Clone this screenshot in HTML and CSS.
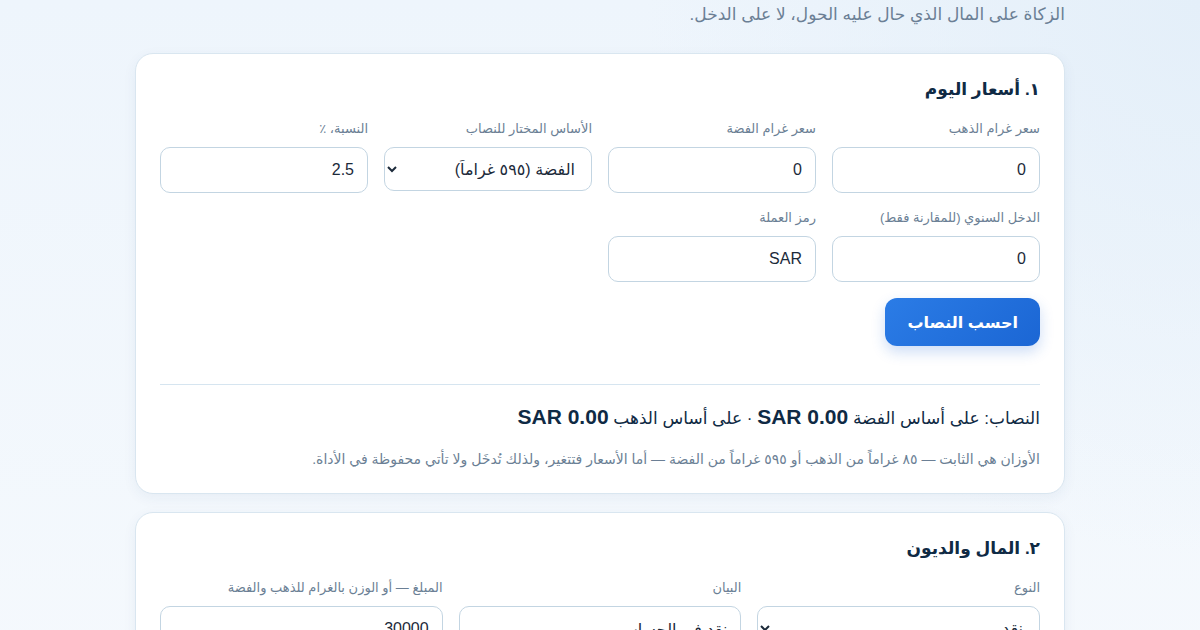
FILE: index.html
```html
<!DOCTYPE html>
<html lang="ar" dir="rtl">
	<head>
		<meta charset="utf-8" />
		<title>حاسبة الزكاة</title>
		<meta name="viewport" content="width=device-width, initial-scale=1" />
		<link rel="stylesheet" href="styles.css">
	</head>
	<body>
		<main class="page">
			<p class="lead">الزكاة على المال الذي حال عليه الحول، لا على الدخل.</p>

			<section class="card">
				<h2>١. أسعار اليوم</h2>

				<div class="grid four">
					<label class="field">
						<span>سعر غرام الذهب</span>
						<input type="text" value="0">
					</label>
					<label class="field">
						<span>سعر غرام الفضة</span>
						<input type="text" value="0">
					</label>
					<label class="field">
						<span>الأساس المختار للنصاب</span>
						<select>
							<option>الفضة (٥٩٥ غراماً)</option>
							<option>الذهب (٨٥ غراماً)</option>
						</select>
					</label>
					<label class="field">
						<span>النسبة، ٪</span>
						<input type="text" value="2.5">
					</label>
					<label class="field">
						<span>الدخل السنوي (للمقارنة فقط)</span>
						<input type="text" value="0">
					</label>
					<label class="field">
						<span>رمز العملة</span>
						<input type="text" value="SAR">
					</label>
				</div>

				<div class="actions">
					<button class="btn">احسب النصاب</button>
				</div>

				<hr>

				<p class="result">النصاب: على أساس الفضة <b>SAR 0.00</b> · على أساس الذهب <b>SAR 0.00</b></p>
				<p class="note">الأوزان هي الثابت — ٨٥ غراماً من الذهب أو ٥٩٥ غراماً من الفضة — أما الأسعار فتتغير، ولذلك تُدخَل ولا تأتي محفوظة في الأداة.</p>
			</section>

			<section class="card">
				<h2>٢. المال والديون</h2>

				<div class="grid three">
					<label class="field">
						<span>النوع</span>
						<select>
							<option>نقد</option>
							<option>ذهب</option>
							<option>فضة</option>
							<option>دين</option>
						</select>
					</label>
					<label class="field">
						<span>البيان</span>
						<input type="text" value="نقد في الحساب">
					</label>
					<label class="field">
						<span>المبلغ — أو الوزن بالغرام للذهب والفضة</span>
						<input type="text" value="30000">
					</label>
				</div>
			</section>
		</main>
	</body>
</html>
```

FILE: styles.css
```css
* { box-sizing: border-box; }

html {
	font: 100%/1.5 "Liberation Sans", "DejaVu Sans", sans-serif;
	color: #0f2a44;
}

body {
	margin: 0;
	min-height: 100vh;
	background:
		radial-gradient(circle at 100% 0%, #e4eff9 0, rgba(228, 239, 249, 0) 40%),
		linear-gradient(180deg, #eef5fc 0%, #f5f9fd 100%);
}

.page {
	width: 930px;
	margin: 0 auto;
}

.lead {
	margin: 0 0 23px;
	font-size: 17px;
	line-height: 30px;
	color: #6b7f95;
}

.card {
	background: #fff;
	border: 1px solid #d9e6f0;
	border-radius: 18px;
	padding: 22px 24px 23px;
	margin-bottom: 18px;
	box-shadow: 0 4px 14px rgba(30, 70, 120, 0.06);
}

.card h2 {
	margin: 0 0 16px;
	font-size: 17px;
	line-height: 28px;
	font-weight: 700;
	color: #0f2a44;
}

.grid {
	display: grid;
	column-gap: 16px;
	row-gap: 16px;
}

.grid.four { grid-template-columns: repeat(4, 1fr); }
.grid.three { grid-template-columns: repeat(3, 1fr); }

.field {
	display: flex;
	flex-direction: column;
	gap: 9px;
}

.field span {
	font-size: 13px;
	line-height: 18px;
	color: #6b7f95;
}

.field input,
.field select {
	height: 46px;
	width: 100%;
	padding: 0 13px;
	font: 16px "Liberation Sans", "DejaVu Sans", sans-serif;
	color: #1c2a3a;
	background: #fff;
	border: 1px solid #c3d5e2;
	border-radius: 10px;
}

.field select {
	height: 44px;
	padding: 0 12px 0 6px;
}

.actions {
	display: flex;
	margin-top: 16px;
}

.btn {
	height: 48px;
	padding: 0 22px;
	font: 700 16px "Liberation Sans", "DejaVu Sans", sans-serif;
	color: #fff;
	background: linear-gradient(135deg, #2b7ce6 0%, #1b66d4 100%);
	border: 0;
	border-radius: 12px;
	box-shadow: 0 6px 14px rgba(27, 102, 212, 0.22);
}

hr {
	margin: 38px 0 0;
	border: 0;
	border-top: 1px solid #d6e5f0;
}

.result {
	margin: 17px 0 0;
	font-size: 17px;
	line-height: 30px;
	color: #0f2a44;
}

.result b {
	font-size: 21px;
}

.note {
	margin: 14px 0 0;
	font-size: 14px;
	line-height: 22px;
	color: #6b7f95;
}
```
